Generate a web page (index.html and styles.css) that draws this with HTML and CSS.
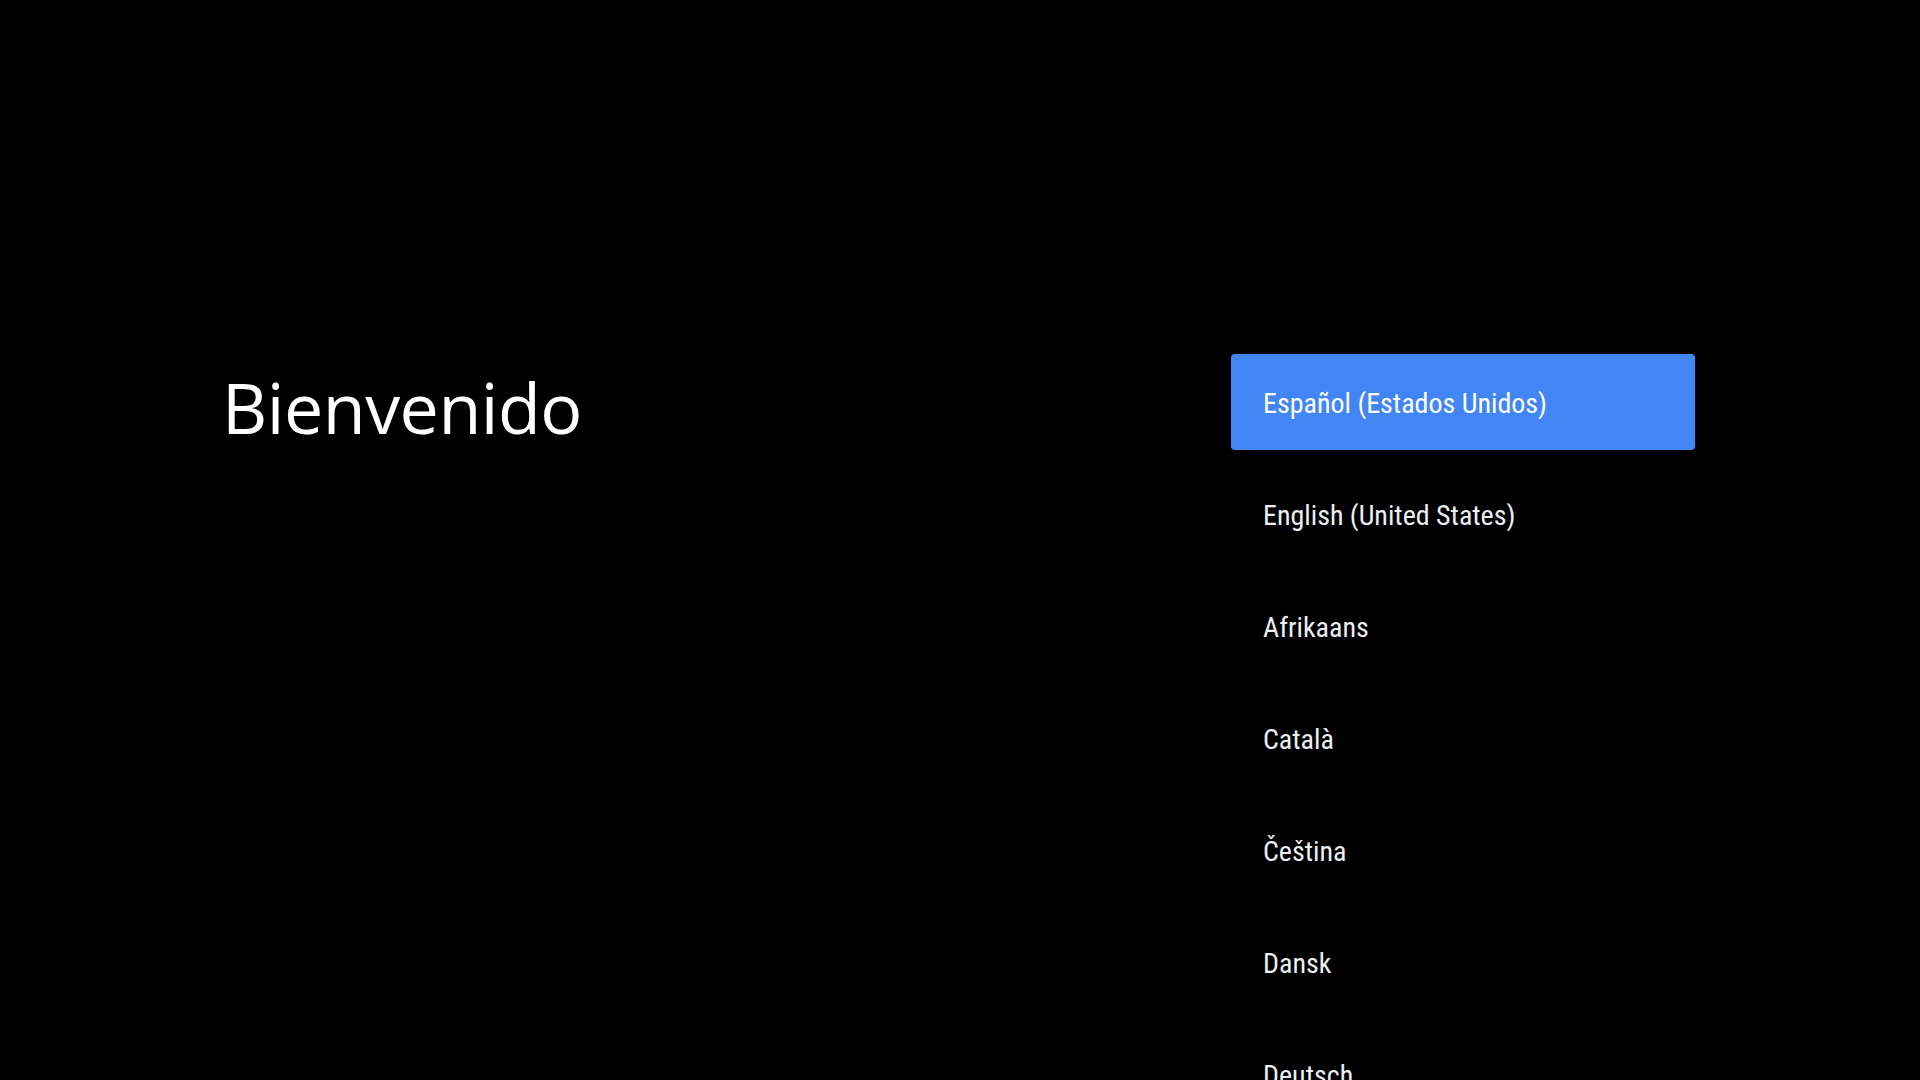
FILE: index.html
```html
<!DOCTYPE html>
<html lang="es">

<head>
  <meta charset="UTF-8">
  <meta name="viewport" content="width=device-width, initial-scale=1.0">
  <title>Bienvenido</title>
  <link rel="stylesheet" href="styles.css">
</head>

<body>
  <div class="screen">
    <div class="intro">
      <h1 class="title">Bienvenido</h1>
    </div>
    <ul class="lang_list">
      <li class="lang_item active">Español (Estados Unidos)</li>
      <li class="lang_item">English (United States)</li>
      <li class="lang_item">Afrikaans</li>
      <li class="lang_item">Català</li>
      <li class="lang_item">Čeština</li>
      <li class="lang_item">Dansk</li>
      <li class="lang_item">Deutsch</li>
    </ul>
  </div>
</body>

</html>
```

FILE: styles.css
```css
/* 기본 */
html,
body {
  margin: 0;
  padding: 0;
  height: 100%;
  background-color: #000;
  overflow: hidden;
}

.screen {
  display: flex;
  height: 1080px;
  padding: 354px 225px 0 222px;
  box-sizing: border-box;
}

.intro {
  flex: 1;
}

.title {
  margin: 5px 0 0;
  font-family: "Open Sans", sans-serif;
  font-weight: 400;
  font-size: 70px;
  letter-spacing: -0.5px;
  line-height: 96px;
  color: #fff;
}

/* 언어 목록 */
.lang_list {
  list-style: none;
  margin: 0;
  padding: 0;
  width: 464px;
  display: flex;
  flex-direction: column;
  gap: 16px;
}

.lang_item {
  flex: none;
  height: 96px;
  line-height: 100px;
  padding: 0 32px;
  border-radius: 4px;
  font-family: "Roboto Condensed", Roboto, sans-serif;
  font-stretch: condensed;
  font-size: 28px;
  color: #eceff1;
}

.lang_item.active {
  background-color: #4285f4;
  color: #fff;
}
```
